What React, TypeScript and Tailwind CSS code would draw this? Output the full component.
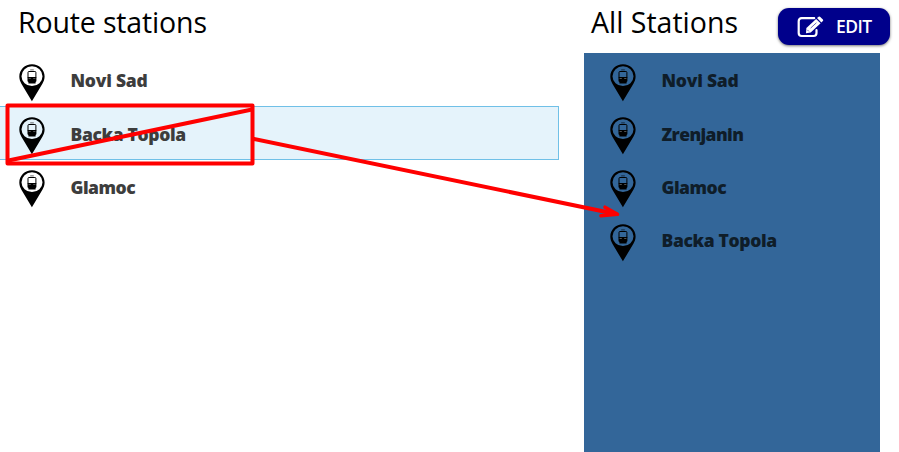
import React from "react";

const routeStations = ["Novi Sad", "Backa Topola", "Glamoc"];
const allStations = ["Novi Sad", "Zrenjanin", "Glamoc", "Backa Topola"];

const tracking: Record<string, string> = {
  "Novi Sad": "tracking-[-0.25px]",
  "Backa Topola": "tracking-[-0.35px]",
  Glamoc: "tracking-[-0.5px]",
  Zrenjanin: "tracking-[-0.6px]",
};

function StationPin() {
  return (
    <svg className="h-[38px] w-[26px] shrink-0" viewBox="0 0 26 38" fill="none">
      <path
        fill="#000"
        fillRule="evenodd"
        d="M13 0.3C5.9 0.3 0.3 5.7 0.3 12.6C0.3 15.6 1.3 17.7 2.4 19.8L12.9 37.3L23.4 19.8C24.6 17.7 25.6 15.6 25.6 12.6C25.6 5.7 20 0.3 13 0.3ZM13 2.3A10.5 9.9 0 1 1 13 22.1A10.5 9.9 0 1 1 13 2.3Z"
      />
      <path d="M9 13.6V8.4Q9 7.5 10 7.5H15.9Q16.9 7.5 16.9 8.4V13.6" stroke="#000" strokeWidth="1" />
      <path d="M11.2 5.9H14.8" stroke="#000" strokeWidth="0.6" />
      <path fill="#000" d="M8.5 13H17.4V17.3L16.6 18.1V19.6H9.4V18.1L8.5 17.3Z" />
      <path d="M9.6 14.5H11.8M14.2 14.5H16.4" stroke="#fff" strokeOpacity="0.4" strokeWidth="0.8" />
    </svg>
  );
}

function EditIcon() {
  return (
    <svg className="h-[22px] w-[27px]" viewBox="0 0 27 22" fill="none">
      <path
        d="M17.2 2.2H4.7Q1.7 2.2 1.7 5.2V17Q1.7 20 4.7 20H16.5Q19.5 20 19.5 17V14.2"
        stroke="#fff"
        strokeWidth="2.2"
        strokeLinecap="round"
      />
      <path fill="#fff" d="M9.4 11.9L19.1 2.9L23.6 7.3L13.7 16.5L9 17.2Z" />
      <path fill="#fff" d="M20 2.1L21.6 0.8Q22.5 0.2 23.3 0.9L25.9 3.4Q26.6 4.2 25.9 5L24.4 6.4Z" />
      <path d="M13.6 12.1L19.4 6.8M10.4 13.9L11.9 15.4" stroke="#00008b" strokeWidth="0.6" />
    </svg>
  );
}

function Station({ name, selected = false, dark = false }: { name: string; selected?: boolean; dark?: boolean }) {
  return (
    <li
      className={`flex h-[53.4px] items-center border-y border-r ${
        selected ? "border-[#70c0e7] bg-[#e5f3fb]" : "border-transparent"
      } ${dark ? "pl-[26px] text-[#0f1d29]" : "pl-[19px] text-[#3d3d3d]"}`}
    >
      <div className="pt-[6px]">
        <StationPin />
      </div>
      <span className={`ml-[25.5px] pt-[1px] text-[17.5px] leading-6 font-extrabold whitespace-nowrap ${tracking[name]}`}>
        {name}
      </span>
    </li>
  );
}

export default function App() {
  return (
    <div className="relative flex h-[452px] w-[899px] overflow-hidden bg-white font-['Open_Sans','Noto_Sans',sans-serif]">
      <section className="w-[559px]">
        <h1 className="h-[53px] pt-[2px] pl-[18px] text-[28.5px] leading-[40px] font-normal tracking-[-0.15px] text-black">
          Route stations
        </h1>
        <ul>
          {routeStations.map((name) => (
            <Station key={name} name={name} selected={name === "Backa Topola"} />
          ))}
        </ul>
      </section>
      <section className="ml-[25px] flex w-[315px] flex-col">
        <header className="flex h-[53px] shrink-0 items-start">
          <h1 className="w-[194px] pt-[2px] pl-[7px] text-[28.5px] leading-[40px] font-normal whitespace-nowrap text-black">
            All Stations
          </h1>
          <button className="mt-[8px] flex h-[37px] w-[112px] items-center rounded-[11px] bg-[#00008b] pl-[19px] text-white shadow-[0_1px_3px_rgba(0,0,0,0.55)]">
            <EditIcon />
            <span className="ml-[12px] text-[17.5px] font-semibold tracking-[-0.6px]">EDIT</span>
          </button>
        </header>
        <ul className="w-[296px] flex-1 bg-[#336699]">
          {allStations.map((name) => (
            <Station key={name} name={name} dark />
          ))}
        </ul>
      </section>
      <svg
        className="pointer-events-none absolute inset-0 h-[452px] w-[899px]"
        viewBox="0 0 899 452"
        fill="none"
        stroke="#f00"
        strokeWidth="4"
        strokeLinejoin="round"
        strokeLinecap="round"
      >
        <rect x="7.5" y="105.5" width="245" height="58" />
        <path d="M8.5 160.5L252 109.5M254 139L616 214" />
        <path d="M605 207.2L617.5 214.3L601 215.8" strokeWidth="3.6" />
      </svg>
    </div>
  );
}
